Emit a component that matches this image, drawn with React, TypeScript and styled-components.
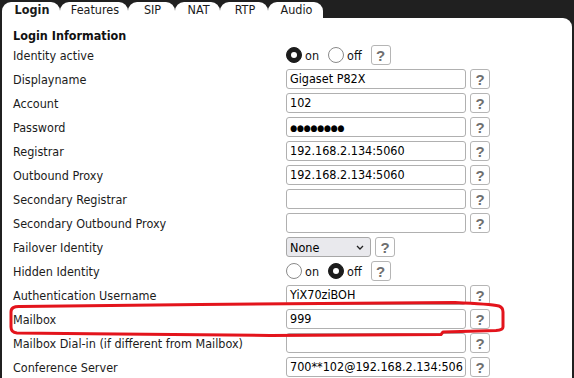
import React from "react";
import styled, { createGlobalStyle } from "styled-components";

const GlobalStyle = createGlobalStyle`
  html, body {
    margin: 0;
    padding: 0;
    background: #202020;
    overflow: hidden;
  }
  body {
    font-family: "DejaVu Sans Condensed", "Liberation Sans", Arial, sans-serif;
    font-stretch: condensed;
  }
`;

const FONT = `"DejaVu Sans Condensed", "Liberation Sans", Arial, sans-serif`;

const Page = styled.div`
  position: relative;
  width: 574px;
  height: 378px;
  overflow: hidden;
  background: #202020;
`;

const TabBar = styled.div`
  display: flex;
  padding: 2px 0 0 2px;
  height: 16px;
`;

const Tab = styled.div<{ $w: number; $active?: boolean }>`
  width: ${(p) => p.$w}px;
  height: 16px;
  background: #ffffff;
  border-radius: 9px 9px 0 0;
  display: flex;
  align-items: center;
  justify-content: center;
  padding-left: 2px;
  box-sizing: border-box;
  font-family: ${FONT};
  font-size: 12.5px;
  font-weight: ${(p) => (p.$active ? 700 : 400)};
  color: #1a1a1a;
  line-height: 16px;
`;

const Panel = styled.div`
  margin: 0 2px 0 2px;
  background: #ffffff;
  border-radius: 0 9px 0 0;
  padding: 10px 0 0 11px;
  height: 400px;
  box-sizing: border-box;
`;

const SectionTitle = styled.div`
  font-family: ${FONT};
  font-size: 12.5px;
  font-weight: 700;
  color: #111;
  line-height: 15px;
`;

const Form = styled.div`
  display: grid;
  grid-template-columns: 273px auto;
  grid-auto-rows: 24px;
  align-items: center;
`;

const Label = styled.div`
  font-family: ${FONT};
  font-size: 12.5px;
  color: #1b1b1b;
  white-space: nowrap;
`;

const Control = styled.div`
  display: flex;
  align-items: center;
  gap: 4px;
`;

const TextField = styled.div`
  width: 180px;
  height: 20px;
  box-sizing: border-box;
  border: 1px solid #b0b0b0;
  border-radius: 3px;
  padding: 0 3px;
  font-family: ${FONT};
  font-size: 12.5px;
  color: #000;
  line-height: 18px;
  white-space: nowrap;
  overflow: hidden;
  background: #fff;
`;

const Dots = styled.span`
  font-family: "DejaVu Sans", sans-serif;
  font-size: 9px;
  letter-spacing: -0.3px;
  font-weight: 700;
`;

const Help = styled.div`
  width: 20px;
  height: 20px;
  box-sizing: border-box;
  border: 1px solid #b5b5b5;
  border-radius: 3px;
  display: flex;
  align-items: center;
  justify-content: center;
  font-family: "Liberation Sans", Arial, sans-serif;
  font-size: 15px;
  font-weight: 700;
  color: #6f6f6f;
  background: #fff;
`;

const Select = styled.div`
  width: 85px;
  height: 20px;
  box-sizing: border-box;
  border: 1px solid #a8a8a8;
  border-radius: 3px;
  background: #e9e9ed;
  display: flex;
  align-items: center;
  justify-content: space-between;
  padding: 0 6px 0 3px;
  font-family: ${FONT};
  font-size: 12.5px;
  color: #000;
`;

const RadioRow = styled.div`
  display: flex;
  align-items: center;
  height: 20px;
`;

const RadioOpt = styled.div`
  display: flex;
  align-items: center;
  gap: 3px;
  margin-right: 9px;
  font-family: ${FONT};
  font-size: 12.5px;
  color: #111;
`;

const RadioDot = styled.span<{ $on?: boolean }>`
  width: 16px;
  height: 16px;
  box-sizing: border-box;
  border-radius: 50%;
  border: 1px solid ${(p) => (p.$on ? "#1c1c1c" : "#8a8a8a")};
  background: ${(p) => (p.$on ? "#1c1c1c" : "#fff")};
  display: flex;
  align-items: center;
  justify-content: center;
  &::after {
    content: "";
    width: 6px;
    height: 6px;
    border-radius: 50%;
    background: ${(p) => (p.$on ? "#fff" : "transparent")};
  }
`;

const Annotation = styled.svg`
  position: absolute;
  left: 0;
  top: 0;
  pointer-events: none;
`;

type Row =
  | { label: string; kind: "radio"; on: boolean }
  | { label: string; kind: "text"; value: string }
  | { label: string; kind: "password" }
  | { label: string; kind: "select"; value: string };

const rows: Row[] = [
  { label: "Identity active", kind: "radio", on: true },
  { label: "Displayname", kind: "text", value: "Gigaset P82X" },
  { label: "Account", kind: "text", value: "102" },
  { label: "Password", kind: "password" },
  { label: "Registrar", kind: "text", value: "192.168.2.134:5060" },
  { label: "Outbound Proxy", kind: "text", value: "192.168.2.134:5060" },
  { label: "Secondary Registrar", kind: "text", value: "" },
  { label: "Secondary Outbound Proxy", kind: "text", value: "" },
  { label: "Failover Identity", kind: "select", value: "None" },
  { label: "Hidden Identity", kind: "radio", on: false },
  { label: "Authentication Username", kind: "text", value: "YiX70ziBOH" },
  { label: "Mailbox", kind: "text", value: "999" },
  { label: "Mailbox Dial-in (if different from Mailbox)", kind: "text", value: "" },
  { label: "Conference Server", kind: "text", value: "700**102@192.168.2.134:506" },
];

const tabs = [
  { name: "Login", w: 58, active: true },
  { name: "Features", w: 68 },
  { name: "SIP", w: 47 },
  { name: "NAT", w: 45 },
  { name: "RTP", w: 48 },
  { name: "Audio", w: 55 },
];

function renderControl(r: Row) {
  switch (r.kind) {
    case "radio":
      return (
        <RadioRow>
          <RadioOpt>
            <RadioDot $on={r.on} />
            on
          </RadioOpt>
          <RadioOpt>
            <RadioDot $on={!r.on} />
            off
          </RadioOpt>
          <Help>?</Help>
        </RadioRow>
      );
    case "select":
      return (
        <>
          <Select>
            <span>{r.value}</span>
            <svg width="8" height="5" viewBox="0 0 8 5">
              <path d="M1 1 L4 4 L7 1" fill="none" stroke="#222" strokeWidth="1.3" />
            </svg>
          </Select>
          <Help>?</Help>
        </>
      );
    case "password":
      return (
        <>
          <TextField>
            <Dots>●●●●●●●●</Dots>
          </TextField>
          <Help>?</Help>
        </>
      );
    default:
      return (
        <>
          <TextField>{r.value}</TextField>
          <Help>?</Help>
        </>
      );
  }
}

export default function App() {
  return (
    <Page>
      <GlobalStyle />
      <TabBar>
        {tabs.map((t) => (
          <Tab key={t.name} $w={t.w} $active={t.active}>
            {t.name}
          </Tab>
        ))}
      </TabBar>
      <Panel>
        <SectionTitle>Login Information</SectionTitle>
        <Form>
          {rows.map((r) => (
            <React.Fragment key={r.label}>
              <Label>{r.label}</Label>
              <Control>{renderControl(r)}</Control>
            </React.Fragment>
          ))}
        </Form>
      </Panel>
      <Annotation width="574" height="378" viewBox="0 0 574 378">
        <path
          d="M 11 312 Q 11 306 20 306.5 L 200 304.5 L 455 302.5 Q 490 304 499 306 Q 503 307.5 503 312 L 503 327 Q 503 330 496 330.5 L 443 332 L 441 334.5 L 270 335.5 L 90 333.8 L 17 333 Q 11 332.5 11 327 Z"
          fill="none"
          stroke="#e3141c"
          strokeWidth="3"
          strokeLinejoin="round"
        />
      </Annotation>
    </Page>
  );
}
